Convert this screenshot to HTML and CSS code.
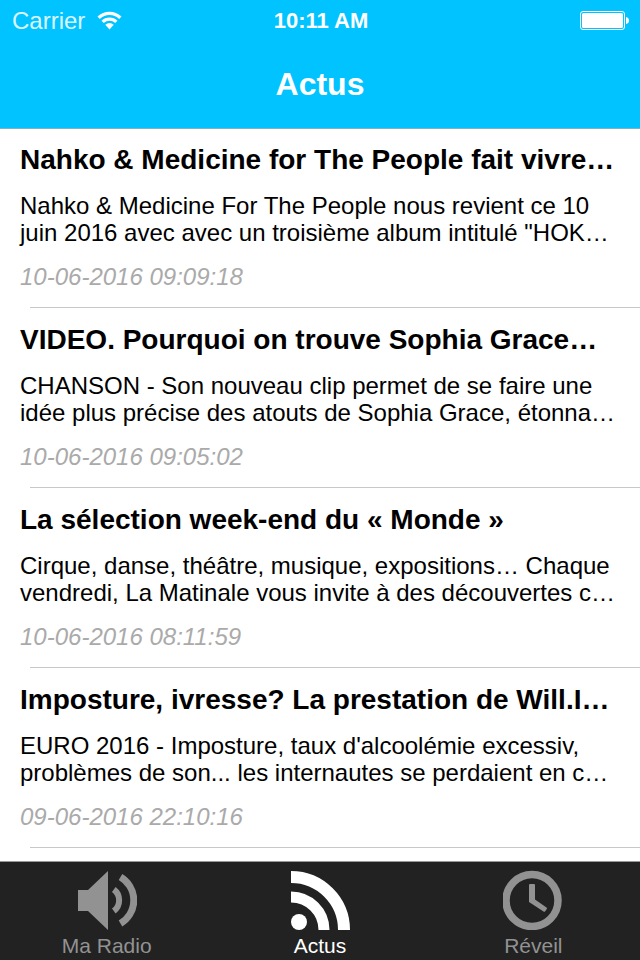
FILE: index.html
```html
<!DOCTYPE html>
<html lang="fr">
<head>
  <meta charset="UTF-8" />
  <meta name="viewport" content="width=device-width, initial-scale=1.0"/>
  <title>Actus</title>
  <link rel="stylesheet" href="styles.css">
</head>
<body>
  <header class="header">
    <div class="status-bar">
      <div class="status-left">
        <span>Carrier</span>
        <svg class="wifi" width="26" height="20" viewBox="0 0 26 20">
          <path d="M0.500 5.500 A17.500 17.500 0 0 1 24.500 5.500 L22.200 7.900 A14.200 14.200 0 0 0 2.800 7.900 Z"/>
          <path d="M4.500 9.800 A11.600 11.600 0 0 1 20.500 9.800 L18.200 12.100 A8.300 8.300 0 0 0 6.800 12.100 Z"/>
          <path d="M8.300 13.800 A6 6 0 0 1 16.700 13.800 L12.500 18.500 Z"/>
        </svg>
      </div>
      <span class="time">10:11 AM</span>
      <div class="status-right">
        <svg width="50" height="20" viewBox="0 0 50 20">
          <rect x="0.5" y="0.5" width="44" height="18" rx="2.5" fill="none" stroke="#fff"/>
          <rect x="2" y="2" width="41" height="15" rx="1.5" fill="#fff"/>
          <path d="M46 6 Q49 6.5 49 9.5 Q49 12.5 46 13 Z" fill="#fff"/>
        </svg>
      </div>
    </div>
    <h1 class="title">Actus</h1>
  </header>

  <main class="news">
    <article class="item">
      <h2>Nahko &amp; Medicine for The People fait vivre…</h2>
      <p>Nahko &amp; Medicine For The People nous revient ce 10<br> juin 2016 avec avec un troisième album intitulé "HOK…</p>
      <time datetime="2016-06-10T09:09:18">10-06-2016 09:09:18</time>
    </article>
    <article class="item">
      <h2>VIDEO. Pourquoi on trouve Sophia Grace…</h2>
      <p>CHANSON - Son nouveau clip permet de se faire une<br> idée plus précise des atouts de Sophia Grace, étonna…</p>
      <time datetime="2016-06-10T09:05:02">10-06-2016 09:05:02</time>
    </article>
    <article class="item">
      <h2>La sélection week-end du « Monde »</h2>
      <p>Cirque, danse, théâtre, musique, expositions… Chaque<br> vendredi, La Matinale vous invite à des découvertes c…</p>
      <time datetime="2016-06-10T08:11:59">10-06-2016 08:11:59</time>
    </article>
    <article class="item">
      <h2>Imposture, ivresse? La prestation de Will.I…</h2>
      <p>EURO 2016 - Imposture, taux d'alcoolémie excessiv,<br> problèmes de son... les internautes se perdaient en c…</p>
      <time datetime="2016-06-09T22:10:16">09-06-2016 22:10:16</time>
    </article>
  </main>

  <nav class="tab-bar">
    <a href="#radio" class="tab">
      <svg width="60" height="60" viewBox="0 0 60 60">
        <path d="M1 20 H11 L31 1 V60 L11 41 H1 Z" fill="currentColor"/>
        <path d="M36.800 19.500 A13.500 13.500 0 0 1 36.800 41" fill="none" stroke="currentColor" stroke-width="6"/>
        <path d="M43.500 7 A27 27 0 0 1 43.500 53.500" fill="none" stroke="currentColor" stroke-width="7"/>
      </svg>
      <span>Ma Radio</span>
    </a>
    <a href="#actus" class="tab active">
      <svg width="60" height="60" viewBox="0 0 60 60">
        <circle cx="9" cy="52" r="8" fill="currentColor"/>
        <path d="M1 27 A33 33 0 0 1 34 60" fill="none" stroke="currentColor" stroke-width="11"/>
        <path d="M1 7 A53 53 0 0 1 54 60" fill="none" stroke="currentColor" stroke-width="12"/>
      </svg>
      <span>Actus</span>
    </a>
    <a href="#reveil" class="tab">
      <svg width="60" height="60" viewBox="0 0 60 60">
        <circle cx="29" cy="30.500" r="26" fill="none" stroke="currentColor" stroke-width="7.500"/>
        <path d="M26 15 Q26 14 27 14 H31 Q32 14 32 15 V29.500 L43.500 37.500 Q44.300 38.100 43.800 39 L42.200 41.300 Q41.500 42.200 40.500 41.600 L26 32 Z" fill="currentColor"/>
      </svg>
      <span>Réveil</span>
    </a>
  </nav>
</body>
</html>
```

FILE: styles.css
```css
* {
  box-sizing: border-box;
}

body {
  font-family: "Liberation Sans", Arial, sans-serif;
  background: #fff;
  color: #000;
  margin: 0;
  min-height: 100vh;
  display: flex;
  flex-direction: column;
}

.header {
  background: #00c3ff;
  color: #fff;
  border-bottom: 1px solid #7fb0c4;
}

.status-bar {
  display: grid;
  grid-template-columns: 1fr auto 1fr;
  align-items: center;
  height: 40px;
  padding: 2px 10px 0 12px;
  font-size: 24px;
}

.status-left {
  display: flex;
  align-items: center;
  gap: 12px;
}

.status-left span {
  opacity: 0.85;
}

.wifi {
  fill: #fff;
}

.time {
  font-size: 22px;
  font-weight: bold;
}

.status-right {
  display: flex;
  justify-content: flex-end;
}

.title {
  margin: 0;
  height: 88px;
  line-height: 88px;
  text-align: center;
  font-size: 32px;
  font-weight: bold;
}

.news {
  flex: 1;
}

.item {
  position: relative;
  padding: 14px 20px;
  height: 180px;
}

/* inset separator, runs to the right edge */
.item::after {
  content: "";
  position: absolute;
  left: 30px;
  right: 0;
  bottom: 1px;
  height: 1px;
  background: #c8c7cc;
}

.item h2 {
  margin: 0 0 15px;
  font-size: 28px;
  line-height: 34px;
  white-space: nowrap;
}

.item p {
  margin: 0 0 17px;
  font-size: 24px;
  line-height: 27px;
  white-space: nowrap;
}

.item time {
  display: block;
  font-size: 24px;
  line-height: 28px;
  font-style: italic;
  color: #aaa;
}

.tab-bar {
  display: flex;
  background: #222;
  border-top: 1px solid #999;
}

.tab {
  flex: 1;
  display: flex;
  flex-direction: column;
  align-items: center;
  gap: 4px;
  padding: 8px 0 2px;
  color: #929292;
  font-size: 21px;
  line-height: 24px;
  text-decoration: none;
}

.tab.active {
  color: #fff;
}
```
